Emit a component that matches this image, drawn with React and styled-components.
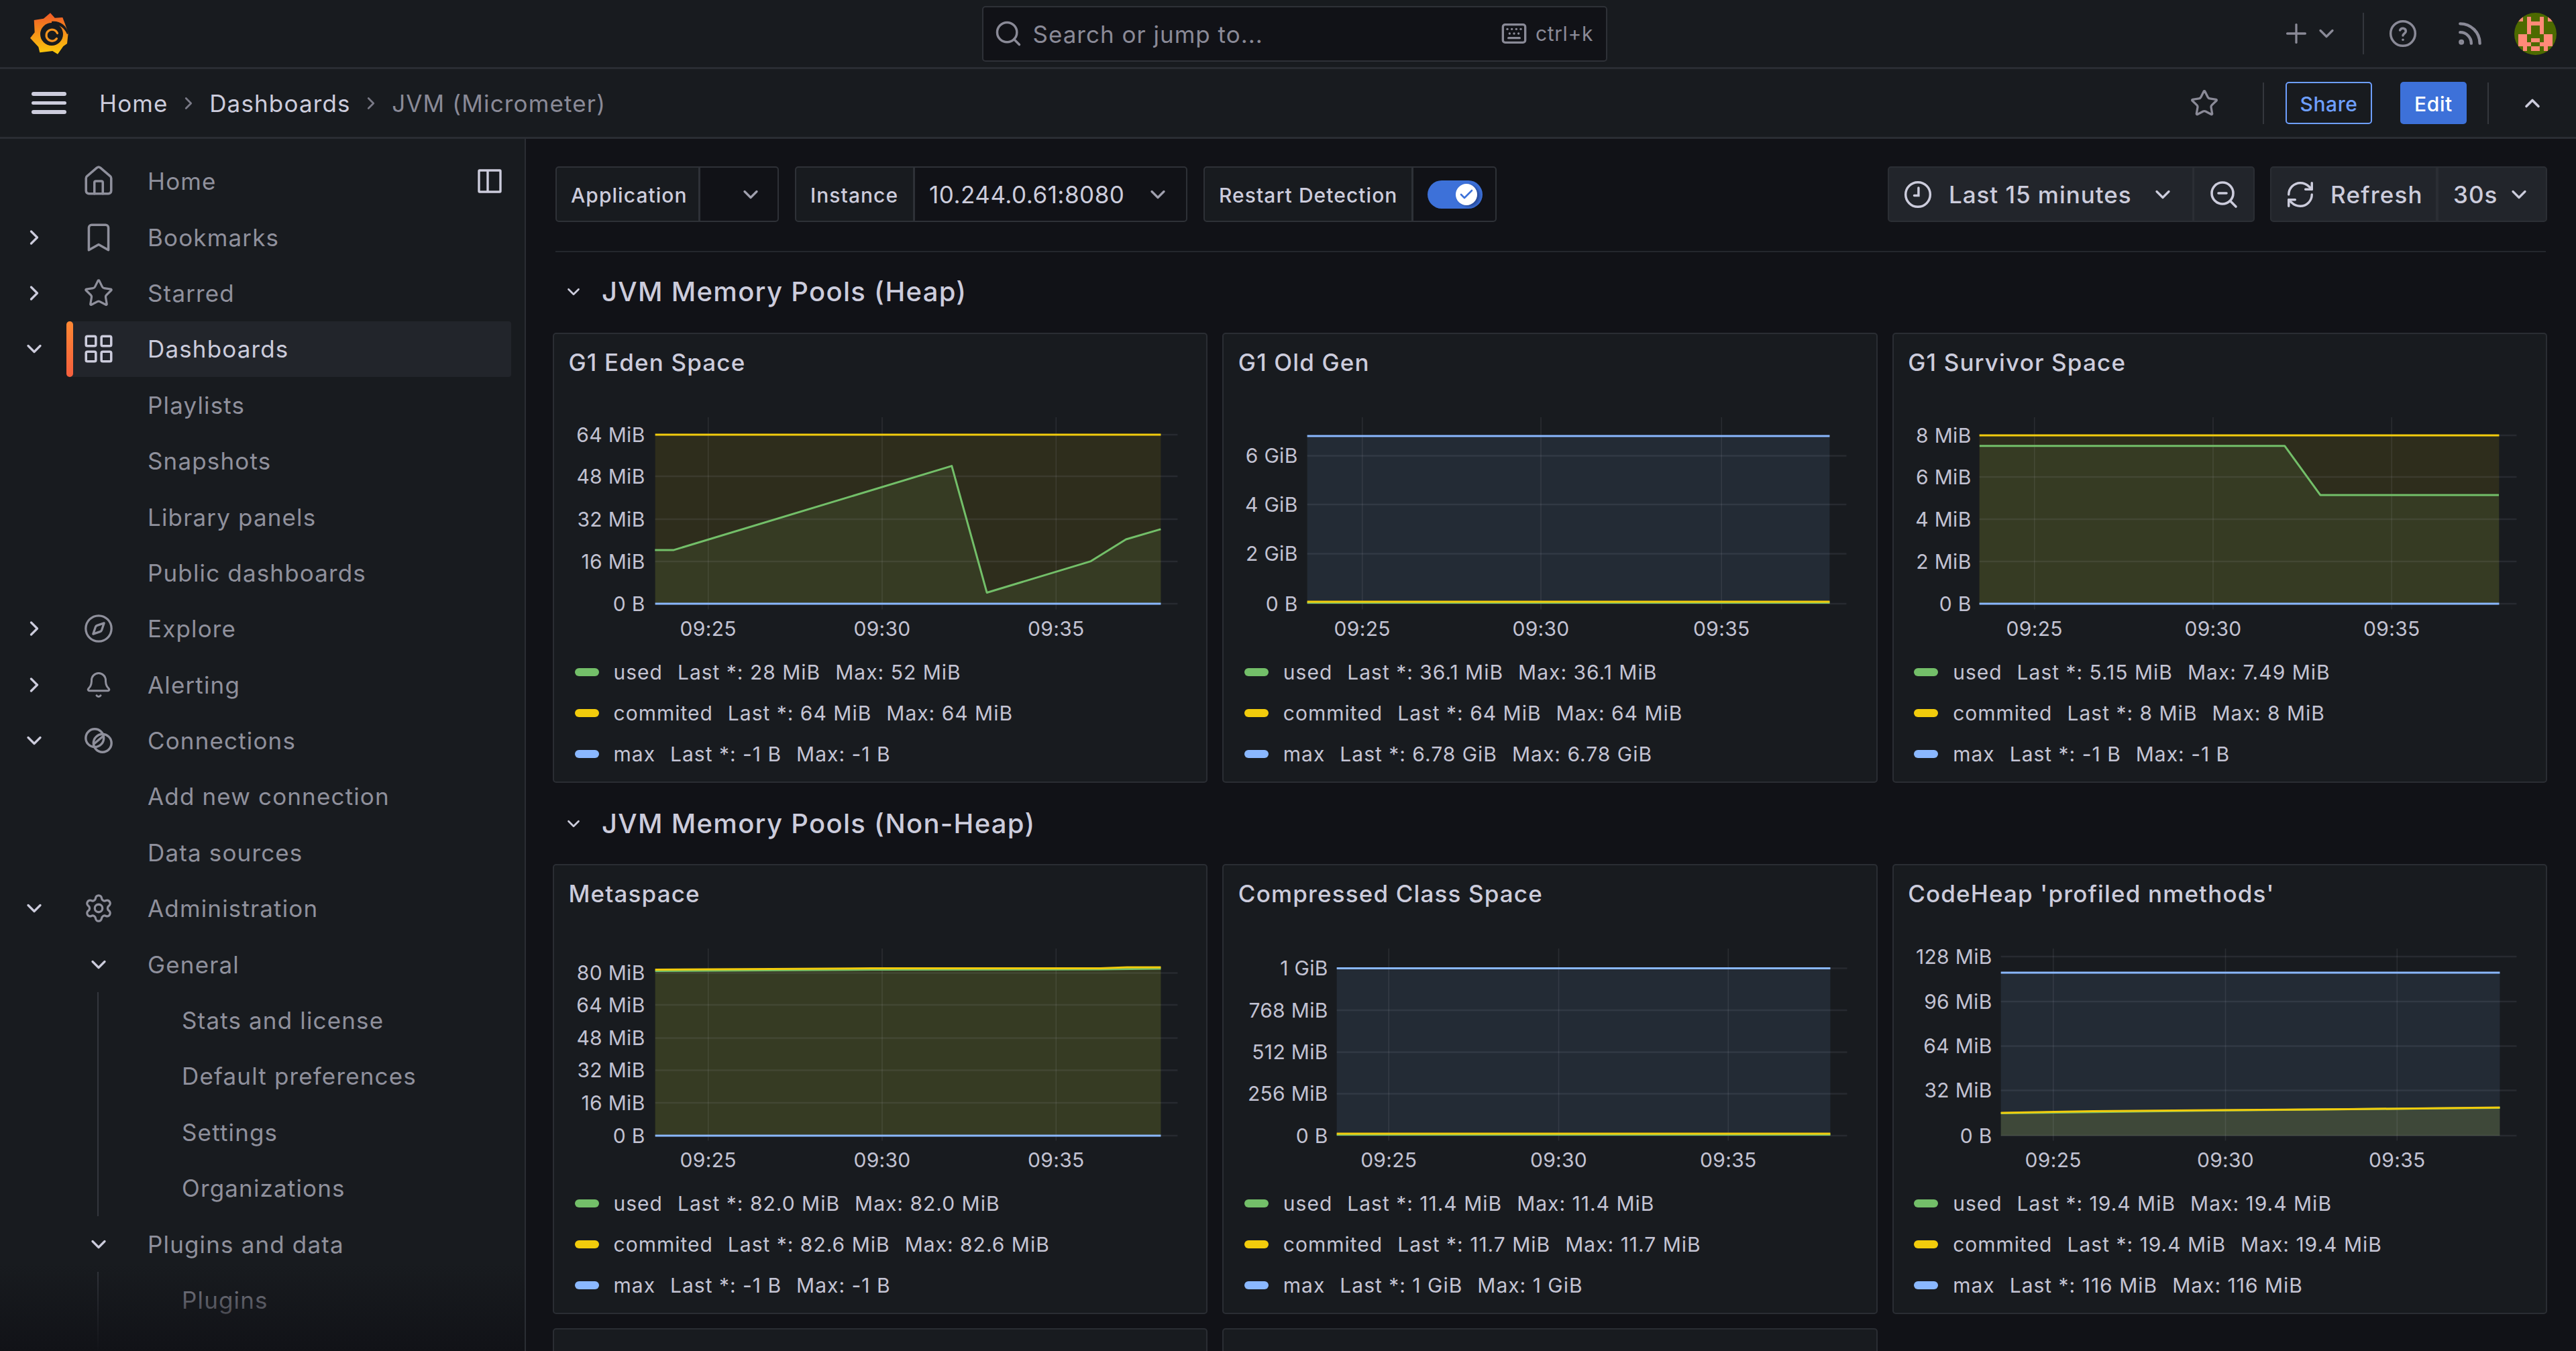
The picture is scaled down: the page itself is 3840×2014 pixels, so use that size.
import React from 'react';
import styled, { createGlobalStyle } from 'styled-components';
import {
  Search, Keyboard, Plus, Rss, ChevronDown, ChevronRight, ChevronUp, Star, Bookmark,
  Compass, Bell, Settings, ZoomOut, RefreshCw, House, LayoutGrid, Check,
} from 'lucide-react';

const Global = createGlobalStyle`
  html, body { margin: 0; padding: 0; background: #111217; }
  body { font-family: Inter, "Noto Sans", sans-serif; color: #ccccdc; font-size: 35px; }
  * { box-sizing: border-box; }
`;

const Page = styled.div`
  width: 3840px; height: 2014px; overflow: hidden; display: flex; flex-direction: column; background: #111217;
`;

/* ---------- top bar ---------- */
const TopBar = styled.header`
  height: 103px; flex: none; display: flex; align-items: center; background: #181b1f;
  border-bottom: 3px solid #2a2d33;
`;
const LogoSlot = styled.div`
  width: 1464px; flex: none; padding-left: 44px; display: flex; align-items: center;
`;
const SearchBox = styled.div`
  width: 932px; height: 83px; flex: none; display: flex; align-items: center; background: #111217;
  border: 2.5px solid #2e3137; border-radius: 5px; padding: 0 19px 0 15px; color: #8a8a97;
`;
const SearchLabel = styled.span`
  margin-left: 14.5px; flex: 1; font-size: 35px; letter-spacing: 1px; padding-top: 1px;
`;
const KbdLabel = styled.span`
  margin-left: 12px; font-size: 30px; letter-spacing: .6px;
`;
const TopRight = styled.div`
  flex: 1; display: flex; align-items: center; justify-content: flex-end; padding-right: 29px; color: #8a8a97;
`;
const IconBox = styled.span`
  display: flex; align-items: center; justify-content: center; flex: none;
  width: ${p => p.$w || 44}px; margin-left: ${p => p.$ml || 0}px; color: ${p => p.$color || 'inherit'};
`;
const VRule = styled.span`
  width: 2px; height: ${p => p.$h || 62}px; flex: none; background: #34373d; margin-left: ${p => p.$ml || 0}px;
`;
const AvatarSvg = styled.svg`
  width: 63px; height: 63px; margin-left: 44px; flex: none; display: block; border-radius: 50%;
`;

/* ---------- breadcrumb bar ---------- */
const CrumbBar = styled.div`
  height: 104px; flex: none; display: flex; align-items: center; background: #181b1f;
  border-bottom: 3px solid #2a2d33; padding: 0 47px;
`;
const Burger = styled.div`
  width: 52px; flex: none; display: flex; flex-direction: column; gap: 8px; margin-right: 49px;
  span { display: block; height: 5.5px; border-radius: 3px; background: #ccccdc; }
`;
const Crumbs = styled.nav`
  flex: 1; display: flex; align-items: center; color: #8a8a97; padding-top: 1px;
`;
const Crumb = styled.span`
  font-size: 35px; color: ${p => (p.$current ? '#8a8a97' : '#ccccdc')}; letter-spacing: 1.15px;
`;
const CrumbSep = styled.span`
  display: flex; width: 61.5px; justify-content: center; color: #7a7a87;
`;
const ShareBtn = styled.button`
  width: 129px; height: 63px; margin-left: 32px; border: 2.5px solid #6e9fff; border-radius: 5px; background: transparent;
  color: #6e9fff; font: 500 30px Inter, sans-serif; letter-spacing: .6px; padding: 2px 0 0;
`;
const EditBtn = styled.button`
  width: 99px; height: 63px; margin-left: 42px; border: 0; border-radius: 5px; background: #3d71d9;
  color: #fff; font: 500 30px Inter, sans-serif; letter-spacing: .6px; padding: 2px 0 0;
`;

/* ---------- body ---------- */
const Body = styled.div`
  flex: 1; min-height: 0; display: flex;
`;
const Sidebar = styled.aside`
  width: 784px; flex: none; background: #181b1f; border-right: 2px solid #2a2d33; padding-top: 21.5px;
  position: relative; overflow: hidden;
`;
const Fade = styled.div`
  position: absolute; left: 0; right: 0; bottom: 0; height: 130px;
  background: linear-gradient(to bottom, rgba(17,18,23,0), rgba(17,18,23,.96));
`;
const Row = styled.div`
  height: 83.4px; display: flex; align-items: center;
`;
const ChevSlot = styled.span`
  width: 99px; flex: none; padding-left: 3px; display: flex; justify-content: center; color: #ccccdc;
`;
const RowBody = styled.div`
  flex: 1; height: 83px; margin-right: 20px; display: flex; align-items: center; position: relative; border-radius: 4px;
  background: ${p => (p.$active ? '#22252b' : 'transparent')};
  color: ${p => (p.$active ? '#ccccdc' : '#8f909c')};
  &::before {
    content: ${p => (p.$active ? "''" : 'none')};
    position: absolute; left: 0; top: 0; bottom: 0; width: 10px; border-radius: 5px;
    background: linear-gradient(to bottom, #ff8833, #f55f3e);
  }
`;
const IconSlot = styled.span`
  width: 96px; flex: none; display: flex; justify-content: center;
`;
const RowLabel = styled.span`
  margin-left: 25px; font-size: 35px; letter-spacing: 1.15px;
`;
const DockIcon = styled.span`
  margin-left: auto; margin-right: 14px; display: flex; color: #ccccdc;
`;
const SubList = styled.div`
  margin-left: 145px; border-left: 2px solid #33363d;
`;
const SubRow = styled.div`
  height: 83.4px; display: flex; align-items: center; padding-left: 124px; color: #8f909c;
  font-size: 35px; letter-spacing: 1.15px;
`;

/* ---------- main ---------- */
const Main = styled.main`
  flex: 1; min-width: 0; padding: 41px 43px 0 40px;
`;
const Toolbar = styled.div`
  display: flex; justify-content: space-between; margin-left: 4px; height: 83px;
`;
const ToolGroup = styled.div`
  display: flex; gap: 24px;
`;
const Joined = styled.div`
  display: flex; gap: ${p => p.$gap || 0}px;
`;
const VarLabel = styled.label`
  width: ${p => p.$w}px; height: 83px; display: flex; align-items: center; padding: 2px 0 0 21px; background: #181b1f;
  border: 2.5px solid #2e3137; border-radius: 5px 0 0 5px; font-weight: 500; font-size: 30px; letter-spacing: 1.05px;
`;
const VarValue = styled.div`
  width: ${p => p.$w}px; height: 83px; display: flex; align-items: center; margin-left: -1px; padding: 1px ${p => p.$pr || 24}px 0 21px;
  background: #111217; border: 2.5px solid #2e3137; border-radius: 0 5px 5px 0; font-size: 35px; letter-spacing: .5px;
  justify-content: ${p => (p.$end ? 'flex-end' : 'space-between')};
`;
const SwitchTrack = styled.span`
  width: 84px; height: 42px; border-radius: 21px; background: #3d71d9; display: flex; align-items: center; justify-content: flex-end; padding-right: 8px;
`;
const SwitchKnob = styled.span`
  width: 32px; height: 32px; border-radius: 50%; background: #fff; display: flex; align-items: center; justify-content: center;
  color: #3d71d9; box-shadow: 4px 2px 4px rgba(20,40,100,.55);
`;
const PickerSeg = styled.div`
  height: 83px; width: ${p => p.$w}px; display: flex; align-items: center; background: #22252b;
  border: 2.5px solid #2b2e34; padding-left: ${p => p.$pl || 0}px;
  border-radius: ${p => p.$r || '0'};
  justify-content: ${p => (p.$center ? 'center' : 'flex-start')};
  margin-left: ${p => p.$ml || 0}px;
`;
const PickerText = styled.span`
  font-size: 35px; font-weight: 500; margin-left: ${p => p.$ml || 0}px; letter-spacing: ${p => p.$ls || '.95px'}; padding-top: 1px;
`;
const ThinRule = styled.hr`
  border: 0; height: 2px; background: #24272d; margin: 43px 2px 0 4px;
`;
const SectionHead = styled.div`
  height: 84px; display: flex; align-items: center; margin: 15px 0 21px; padding: 3px 0 0 16px;
`;
const SectionHead2 = styled(SectionHead)`
  margin: 17px 0 20px;
`;
const SectionChev = styled.span`
  display: flex; width: 30px; justify-content: center; color: #ccccdc;
`;
const SectionTitle = styled.h2`
  margin: 0 0 0 27px; font-size: 40px; font-weight: 500; letter-spacing: 1.3px; color: #ccccdc;
`;
const PanelGrid = styled.div`
  display: grid; grid-template-columns: repeat(3, 1fr); column-gap: 22px; row-gap: 21px;
`;
const Panel = styled.section`
  height: 671px; background: #181b1f; border: 2.5px solid #2a2d33; border-radius: 5px; overflow: hidden;
`;
const PanelTitle = styled.h3`
  height: 84px; margin: 0 0 3.5px; padding-left: 21.5px; display: flex; align-items: center;
  font-size: 35px; font-weight: 500; color: #ccccdc; letter-spacing: 1.15px;
`;
const ChartSvg = styled.svg`
  display: block; width: 100%; height: 384.5px;
`;
const AxisText = styled.text`
  font: 400 30px Inter, sans-serif; fill: #c2c2d2; letter-spacing: .3px;
`;
const Legend = styled.ul`
  list-style: none; margin: 0; padding: 1.5px 0 0 30.5px;
`;
const LegendRow = styled.li`
  height: 61.2px; display: flex; align-items: center; font-size: 30px; color: #c4c4d4; letter-spacing: 1px;
`;
const Swatch = styled.span`
  width: 36px; height: 12px; border-radius: 6px; flex: none; margin-right: 22px; background: ${p => p.$c};
`;
const LegendStat = styled.span`
  margin-left: 22px;
`;

/* ---------- drawings ---------- */
const GREEN = '#73bf69', YELLOW = '#f2cc0c', BLUE = '#8ab8ff';

function GrafanaLogo() {
  return (
    <svg width="59" height="64" viewBox="44 18 59 64" aria-hidden="true">
      <defs>
        <linearGradient id="gf" x1="0" y1="0" x2="0" y2="1">
          <stop offset="0" stopColor="#f05a28" />
          <stop offset="1" stopColor="#fbca0a" />
        </linearGradient>
      </defs>
      <path fill="url(#gf)" d="M75 19.3 L81.7 26.7 L93.3 26 L96.7 35 L101.7 49.3 L100 65 L94.3 69 L86 80.7 L78.3 76 L59.3 78.3 L57.3 70 L45 56.7 L51.7 48.3 L50.7 30 L65 27.7 Z" />
      <circle cx="77" cy="51" r="17" fill="#181b1f" />
      <path fill="#181b1f" d="M102 50 C99.5 37 88 30.5 77 32 L77 37 C87 35.5 96 41 100 51 Z" />
      <path fill="none" stroke="#f7941e" strokeWidth="3.2" strokeLinecap="round" d="M84.5 57.5 A8.5 8.5 0 1 1 85.5 49.5" />
    </svg>
  );
}

function Avatar() {
  const cells = {
    1: [1, 3, 6, 8], 2: [3, 4, 5, 6], 3: [3, 6], 4: [3, 6], 5: [1, 2, 7, 8],
    6: [1, 2, 4, 5, 7, 8], 7: [1, 2, 3, 6, 7, 8], 8: [2, 4, 5, 7],
  };
  return (
    <AvatarSvg viewBox="0 0 10 10" shapeRendering="crispEdges" aria-hidden="true">
      <rect width="10" height="10" fill="#4d6a00" />
      {Object.entries(cells).map(([r, cs]) => cs.map(c => (
        <rect key={`${r}-${c}`} x={c} y={r} width="1" height="1" fill="#ff8a78" />
      )))}
    </AvatarSvg>
  );
}

const HelpIcon = () => (
  <svg width="44" height="44" viewBox="0 0 24 24" fill="none" stroke="currentColor" strokeWidth="1.9" strokeLinecap="round">
    <circle cx="12" cy="12" r="10" />
    <path d="M9.6 9.3a2.5 2.5 0 0 1 4.8.8c0 1.6-2.4 2-2.4 3.6" /><path d="M12 17h.01" />
  </svg>
);
const ClockIcon = () => (
  <svg width="44" height="44" viewBox="0 0 24 24" fill="none" stroke="currentColor" strokeWidth="1.9" strokeLinecap="round">
    <circle cx="12" cy="12" r="10" /><path d="M12.5 6.5v6.3H9" />
  </svg>
);
const ConnIcon = () => (
  <svg width="46" height="46" viewBox="0 0 24 24" fill="none" stroke="currentColor" strokeWidth="1.8" strokeLinecap="round">
    <circle cx="9" cy="10" r="7" /><circle cx="15" cy="14" r="7" /><path d="M8.5 14.5 15 9" />
  </svg>
);
const PanelDockIcon = () => (
  <svg width="36" height="36" viewBox="0 0 36 36" fill="none" stroke="currentColor" strokeWidth="3.4">
    <rect x="2" y="2" width="32" height="32" rx="1" /><path d="M15 2v32" />
  </svg>
);

function Chart({ left, top, plot, gridR, ys, xs, labelR, gridTop, gridBot, xLabelY, series }) {
  const [pl, pr] = plot;
  const base = ys[ys.length - 1][1];
  const line = pts => pts.map(([x, y]) => `${x},${y}`).join(' ');
  return (
    <ChartSvg viewBox={`${left + 2.5} ${top + 90} 971.3 384.5`} preserveAspectRatio="none" role="img">
      {series.map(s => (
        <polygon key={`f${s.c}`} points={`${pl},${base} ${line(s.pts)} ${pr},${base}`} fill={s.c} fillOpacity=".1" />
      ))}
      {ys.map(([l, y]) => (
        <line key={l} x1={pl} x2={gridR} y1={y} y2={y} stroke="#ccccdc" strokeOpacity=".09" strokeWidth="2.4" />
      ))}
      {xs.map(x => (
        <line key={x} x1={x} x2={x} y1={gridTop} y2={gridBot} stroke="#ccccdc" strokeOpacity=".1" strokeWidth="1.6" />
      ))}
      {series.map(s => (
        <polyline key={`l${s.c}`} points={line(s.pts)} fill="none" stroke={s.c} strokeWidth="3" strokeLinejoin="round" />
      ))}
      {ys.map(([l, y]) => (
        <AxisText key={`t${l}`} x={labelR} y={y} textAnchor="end" dominantBaseline="central">{l}</AxisText>
      ))}
      {xs.map((x, i) => (
        <AxisText key={`x${x}`} x={x} y={xLabelY} textAnchor="middle" dominantBaseline="central">{['09:25', '09:30', '09:35'][i]}</AxisText>
      ))}
    </ChartSvg>
  );
}

const flat = (y, a, b) => [[a, y], [b, y]];
const z4 = (x, y) => [800 + x / 1.568, 480 + y / 2.24];
const z9 = (x, y) => [2800 + x / 1.5077, 480 + y / 2.24];

const panelsRow1 = [
  {
    title: 'G1 Eden Space', left: 824, top: 497, plot: [977, 1730], gridR: 1755, labelR: 962, xs: [1056, 1315, 1574],
    ys: [['64 MiB', 649], ['48 MiB', 711], ['32 MiB', 775], ['16 MiB', 838], ['0 B', 901]],
    series: [
      { c: GREEN, pts: [[277, 764], [320, 764], [970, 483], [1052, 906], [1295, 801], [1377, 728], [1458, 694]].map(p => z4(...p)) },
      { c: YELLOW, pts: flat(649, 977, 1730) },
      { c: BLUE, pts: flat(901, 977, 1730) },
    ],
    legend: [['used', '28 MiB', '52 MiB'], ['commited', '64 MiB', '64 MiB'], ['max', '-1 B', '-1 B']],
  },
  {
    title: 'G1 Old Gen', left: 1822, top: 497, plot: [1949, 2727], gridR: 2752, labelR: 1935, xs: [2031, 2297, 2566],
    ys: [['6 GiB', 680.5], ['4 GiB', 753], ['2 GiB', 826.5], ['0 B', 901]],
    series: [
      { c: GREEN, pts: flat(899.5, 1949, 2727) },
      { c: YELLOW, pts: flat(898, 1949, 2727) },
      { c: BLUE, pts: flat(651, 1949, 2727) },
    ],
    legend: [['used', '36.1 MiB', '36.1 MiB'], ['commited', '64 MiB', '64 MiB'], ['max', '6.78 GiB', '6.78 GiB']],
  },
  {
    title: 'G1 Survivor Space', left: 2821, top: 497, plot: [2951, 3725], gridR: 3751, labelR: 2939, xs: [3033, 3299, 3565],
    ys: [['8 MiB', 650], ['6 MiB', 712], ['4 MiB', 775], ['2 MiB', 838], ['0 B', 901]],
    series: [
      { c: GREEN, pts: [[228, 416], [913, 416], [993, 580], [1394, 580]].map(p => z9(...p)) },
      { c: YELLOW, pts: flat(650, 2951, 3725) },
      { c: BLUE, pts: flat(901, 2951, 3725) },
    ],
    legend: [['used', '5.15 MiB', '7.49 MiB'], ['commited', '8 MiB', '8 MiB'], ['max', '-1 B', '-1 B']],
  },
];

const panelsRow2 = [
  {
    title: 'Metaspace', left: 824, top: 1289, plot: [977, 1730], gridR: 1755, labelR: 962, xs: [1056, 1315, 1574],
    ys: [['80 MiB', 1451.5], ['64 MiB', 1499], ['48 MiB', 1548.5], ['32 MiB', 1596.5], ['16 MiB', 1645], ['0 B', 1694]],
    series: [
      { c: GREEN, pts: [[977, 1448.5], [1300, 1446.5], [1640, 1446], [1730, 1445]] },
      { c: YELLOW, pts: [[977, 1446.5], [1150, 1445.5], [1300, 1444.5], [1640, 1444.5], [1680, 1443], [1730, 1443]] },
      { c: BLUE, pts: flat(1694, 977, 1730) },
    ],
    legend: [['used', '82.0 MiB', '82.0 MiB'], ['commited', '82.6 MiB', '82.6 MiB'], ['max', '-1 B', '-1 B']],
  },
  {
    title: 'Compressed Class Space', left: 1822, top: 1289, plot: [1993, 2728], gridR: 2753, labelR: 1980, xs: [2070.5, 2323.5, 2576],
    ys: [['1 GiB', 1444.5], ['768 MiB', 1507], ['512 MiB', 1569.5], ['256 MiB', 1631.5], ['0 B', 1694]],
    series: [
      { c: GREEN, pts: flat(1692.5, 1993, 2728) },
      { c: YELLOW, pts: flat(1691, 1993, 2728) },
      { c: BLUE, pts: flat(1444.5, 1993, 2728) },
    ],
    legend: [['used', '11.4 MiB', '11.4 MiB'], ['commited', '11.7 MiB', '11.7 MiB'], ['max', '1 GiB', '1 GiB']],
  },
  {
    title: "CodeHeap 'profiled nmethods'", left: 2821, top: 1289, plot: [2983, 3726], gridR: 3751, labelR: 2970, xs: [3061, 3317.5, 3573],
    ys: [['128 MiB', 1427], ['96 MiB', 1494], ['64 MiB', 1560.5], ['32 MiB', 1626.5], ['0 B', 1694]],
    series: [
      { c: GREEN, pts: [[2983, 1660.5], [3300, 1656.5], [3726, 1652.5]] },
      { c: YELLOW, pts: [[2983, 1660], [3120, 1657.5], [3300, 1656], [3500, 1654.5], [3726, 1652]] },
      { c: BLUE, pts: flat(1451, 2983, 3726) },
    ],
    legend: [['used', '19.4 MiB', '19.4 MiB'], ['commited', '19.4 MiB', '19.4 MiB'], ['max', '116 MiB', '116 MiB']],
  },
];

function GraphPanel({ p }) {
  const colors = [GREEN, YELLOW, BLUE];
  const bot = p.top + 412.5;
  return (
    <Panel>
      <PanelTitle>{p.title}</PanelTitle>
      <Chart {...p} gridTop={p.top + 126} gridBot={bot} xLabelY={p.top + 441} />
      <Legend>
        {p.legend.map(([name, last, max], i) => (
          <LegendRow key={name}>
            <Swatch $c={colors[i]} />
            <span>{name}</span>
            <LegendStat>Last *: {last}</LegendStat>
            <LegendStat>Max: {max}</LegendStat>
          </LegendRow>
        ))}
      </Legend>
    </Panel>
  );
}

function NavRow({ label, Icon, iconSize, glyph, chev, active, dock }) {
  return (
    <Row>
      <ChevSlot>
        {chev === 'right' && <ChevronRight size={36} strokeWidth={2.2} />}
        {chev === 'down' && <ChevronDown size={36} strokeWidth={2.2} />}
      </ChevSlot>
      <RowBody $active={active}>
        <IconSlot>{Icon ? <Icon size={iconSize || 50} strokeWidth={1.7} /> : glyph}</IconSlot>
        <RowLabel>{label}</RowLabel>
        {dock && <DockIcon><PanelDockIcon /></DockIcon>}
      </RowBody>
    </Row>
  );
}

const chev = <ChevronDown size={36} strokeWidth={2.2} color="#ccccdc" />;

export default function App() {
  return (
    <Page>
      <Global />
      <TopBar>
        <LogoSlot><GrafanaLogo /></LogoSlot>
        <SearchBox>
          <Search size={44} strokeWidth={1.9} />
          <SearchLabel>Search or jump to...</SearchLabel>
          <Keyboard size={40} strokeWidth={2} />
          <KbdLabel>ctrl+k</KbdLabel>
        </SearchBox>
        <TopRight>
          <IconBox $w={46}><Plus size={56} strokeWidth={1.7} /></IconBox>
          <IconBox $w={36} $ml={4}><ChevronDown size={36} strokeWidth={2.2} /></IconBox>
          <VRule $ml={36} />
          <IconBox $ml={36}><HelpIcon /></IconBox>
          <IconBox $ml={56}><Rss size={44} strokeWidth={2.4} /></IconBox>
          <Avatar />
        </TopRight>
      </TopBar>

      <CrumbBar>
        <Burger><span /><span /><span /></Burger>
        <Crumbs>
          <Crumb>Home</Crumb>
          <CrumbSep><ChevronRight size={30} strokeWidth={2.2} /></CrumbSep>
          <Crumb>Dashboards</Crumb>
          <CrumbSep><ChevronRight size={30} strokeWidth={2.2} /></CrumbSep>
          <Crumb $current>JVM (Micrometer)</Crumb>
        </Crumbs>
        <IconBox $color="#8a8a97"><Star size={48} strokeWidth={1.8} /></IconBox>
        <VRule $ml={65} />
        <ShareBtn>Share</ShareBtn>
        <EditBtn>Edit</EditBtn>
        <VRule $ml={31} />
        <IconBox $w={36} $ml={47} $color="#ccccdc"><ChevronUp size={44} strokeWidth={2.4} /></IconBox>
      </CrumbBar>

      <Body>
        <Sidebar>
          <NavRow label="Home" Icon={House} dock />
          <NavRow label="Bookmarks" Icon={Bookmark} chev="right" />
          <NavRow label="Starred" Icon={Star} iconSize={46} chev="right" />
          <NavRow label="Dashboards" Icon={LayoutGrid} chev="down" active />
          <NavRow label="Playlists" />
          <NavRow label="Snapshots" />
          <NavRow label="Library panels" />
          <NavRow label="Public dashboards" />
          <NavRow label="Explore" Icon={Compass} iconSize={46} chev="right" />
          <NavRow label="Alerting" Icon={Bell} iconSize={42} chev="right" />
          <NavRow label="Connections" glyph={<ConnIcon />} chev="down" />
          <NavRow label="Add new connection" />
          <NavRow label="Data sources" />
          <NavRow label="Administration" Icon={Settings} iconSize={46} chev="down" />
          <NavRow label="General" glyph={chev} />
          <SubList>
            <SubRow>Stats and license</SubRow>
            <SubRow>Default preferences</SubRow>
            <SubRow>Settings</SubRow>
            <SubRow>Organizations</SubRow>
          </SubList>
          <NavRow label="Plugins and data" glyph={chev} />
          <SubList>
            <SubRow>Plugins</SubRow>
            <SubRow />
          </SubList>
          <Fade />
        </Sidebar>

        <Main>
          <Toolbar>
            <ToolGroup>
              <Joined>
                <VarLabel $w={215}>Application</VarLabel>
                <VarValue $w={119} $end $pr={22}><ChevronDown size={36} strokeWidth={2.2} color="#a0a0ae" /></VarValue>
              </Joined>
              <Joined>
                <VarLabel $w={178}>Instance</VarLabel>
                <VarValue $w={408} $pr={24}>10.244.0.61:8080<ChevronDown size={36} strokeWidth={2.2} color="#a0a0ae" /></VarValue>
              </Joined>
              <Joined>
                <VarLabel $w={312}>Restart Detection</VarLabel>
                <VarValue $w={126} $pr={19}>
                  <SwitchTrack><SwitchKnob><Check size={24} strokeWidth={2.6} /></SwitchKnob></SwitchTrack>
                </VarValue>
              </Joined>
            </ToolGroup>
            <Joined $gap={23}>
              <Joined>
                <PickerSeg $w={456} $pl={21} $r="5px 0 0 5px">
                  <ClockIcon />
                  <PickerText $ml={24}>Last 15 minutes</PickerText>
                  <IconBox $w={36} $ml={28}><ChevronDown size={36} strokeWidth={2.2} /></IconBox>
                </PickerSeg>
                <PickerSeg $w={92} $center $r="0 5px 5px 0" $ml={-1}><ZoomOut size={48} strokeWidth={1.8} /></PickerSeg>
              </Joined>
              <Joined>
                <PickerSeg $w={249} $pl={20} $r="5px 0 0 5px"><RefreshCw size={46} strokeWidth={1.8} /><PickerText $ml={22} $ls="1.2px">Refresh</PickerText></PickerSeg>
                <PickerSeg $w={164} $pl={22} $r="0 5px 5px 0"><PickerText>30s</PickerText><IconBox $w={36} $ml={14}><ChevronDown size={36} strokeWidth={2.2} /></IconBox></PickerSeg>
              </Joined>
            </Joined>
          </Toolbar>
          <ThinRule />

          <SectionHead>
            <SectionChev><ChevronDown size={36} strokeWidth={2.2} /></SectionChev>
            <SectionTitle>JVM Memory Pools (Heap)</SectionTitle>
          </SectionHead>
          <PanelGrid>
            {panelsRow1.map(p => <GraphPanel key={p.title} p={p} />)}
          </PanelGrid>

          <SectionHead2>
            <SectionChev><ChevronDown size={36} strokeWidth={2.2} /></SectionChev>
            <SectionTitle>JVM Memory Pools (Non-Heap)</SectionTitle>
          </SectionHead2>
          <PanelGrid>
            {panelsRow2.map(p => <GraphPanel key={p.title} p={p} />)}
            <Panel />
            <Panel />
          </PanelGrid>
        </Main>
      </Body>
    </Page>
  );
}
